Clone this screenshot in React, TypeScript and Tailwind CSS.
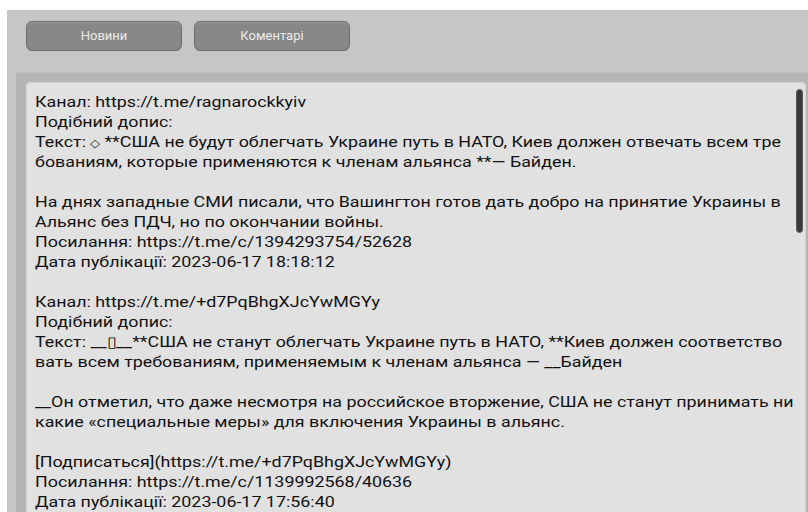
import React from "react";

type Post = {
  channel: string;
  lines: React.ReactNode[];
};

// Each post body is pre-wrapped the way the reader view breaks it
const POSTS: Post[] = [
  {
    channel: "Канал: https://t.me/ragnarockkyiv",
    lines: [
      "Подібний допис:",
      <>
        Текст: <span className="text-[11px]">◇</span> **США не будут облегчать Украине путь в НАТО, Киев должен отвечать всем тре
      </>,
      "бованиям, которые применяются к членам альянса **— Байден.",
      "",
      "На днях западные СМИ писали, что Вашингтон готов дать добро на принятие Украины в",
      "Альянс без ПДЧ, но по окончании войны.",
      "Посилання: https://t.me/c/1394293754/52628",
      "Дата публікації: 2023-06-17 18:18:12",
    ],
  },
  {
    channel: "Канал: https://t.me/+d7PqBhgXJcYwMGYy",
    lines: [
      "Подібний допис:",
      "Текст: __▯__**США не станут облегчать Украине путь в НАТО, **Киев должен соответство",
      "вать всем требованиям, применяемым к членам альянса — __Байден",
      "",
      "__Он отметил, что даже несмотря на российское вторжение, США не станут принимать ни",
      "какие «специальные меры» для включения Украины в альянс.",
      "",
      "[Подписаться](https://t.me/+d7PqBhgXJcYwMGYy)",
      "Посилання: https://t.me/c/1139992568/40636",
      "Дата публікації: 2023-06-17 17:56:40",
    ],
  },
];

function TabButton({ label }: { label: string }) {
  return (
    <button className="w-[156px] h-[30px] rounded-[6px] bg-[#878787] border border-[#6e6e6e] text-[13px] text-[#ececec] shadow-[inset_0_1px_0_rgba(255,255,255,0.15)]">
      {label}
    </button>
  );
}

export default function App() {
  return (
    <div
      className="w-[808px] h-[512px] bg-white overflow-hidden pt-[10px] pl-[7px]"
      style={{ fontFamily: "Roboto, 'Liberation Sans', sans-serif" }}
    >
      <div className="h-full bg-[#c6c6c6] flex flex-col">
        {/* Tabs */}
        <div className="flex gap-3 pl-[19px] pt-[11px]">
          <TabButton label="Новини" />
          <TabButton label="Коментарі" />
        </div>

        {/* Feed */}
        <div className="mt-[21px] ml-[9px] flex-1 bg-[#b5b5b5] border-t border-[#bdbdbd] pt-[9px] pl-[10px] pr-[2px] min-h-0">
          <div className="relative h-full bg-[#e1e1e1] border-t border-l border-r border-[#d4d4d4] rounded-t-[4px] pl-[8px] pt-[9px] pr-4 overflow-hidden">
            <div className="origin-top-left scale-x-[1.19] text-[15px] leading-[20px] text-[#111111] whitespace-pre">
              {POSTS.map((post, i) => (
                <div key={i} className={i > 0 ? "mt-[20px]" : ""}>
                  <div>{post.channel}</div>
                  {post.lines.map((line, j) => (
                    <div key={j} className="h-[20px]">
                      {line}
                    </div>
                  ))}
                </div>
              ))}
            </div>

            {/* Scroll thumb */}
            <div className="absolute top-[6px] right-[2px] w-[7px] h-[144px] rounded-full bg-[#3a3a3a] border border-[#5a5a5a]" />
          </div>
        </div>
      </div>
    </div>
  );
}
